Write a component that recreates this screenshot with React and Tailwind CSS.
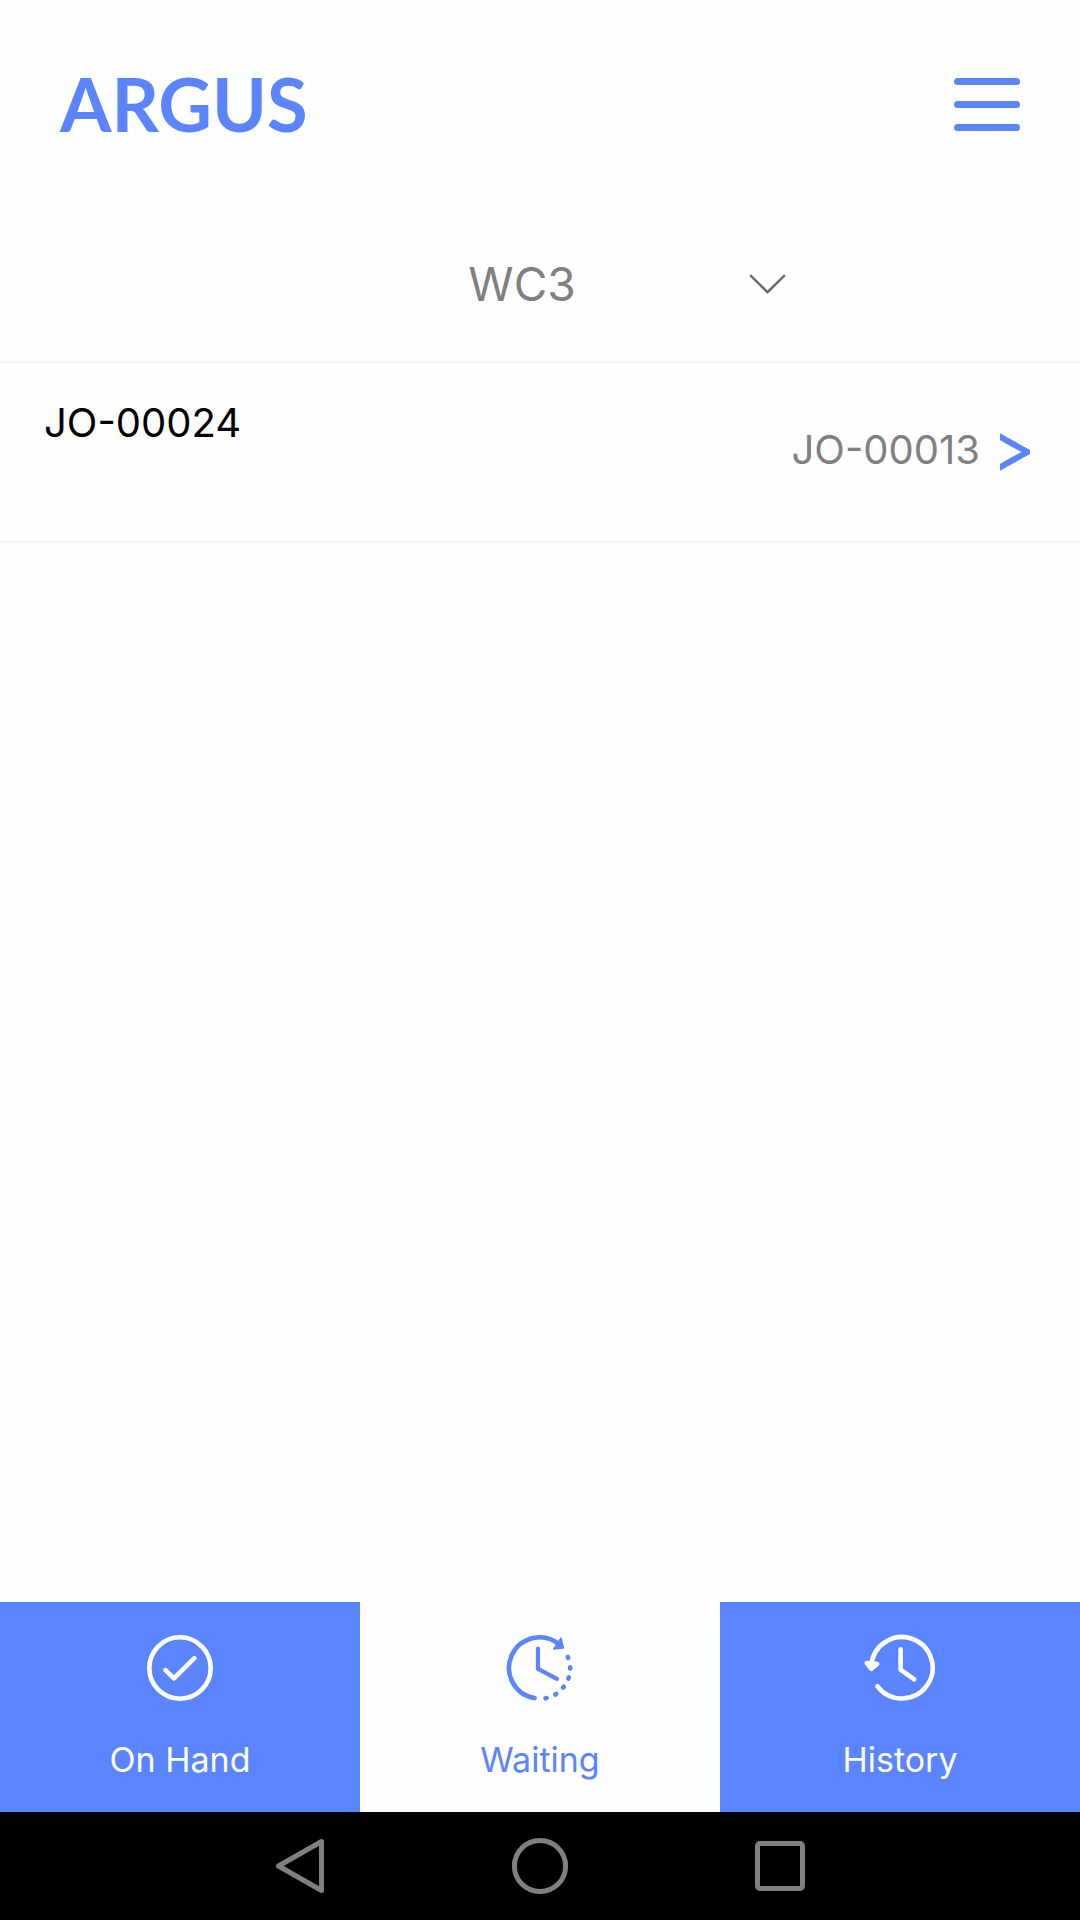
import React, { useState } from 'react';

const WORK_CENTERS = ['WC1', 'WC2', 'WC3'];

const JOB_ORDERS = [{ id: 'JO-00024', next: 'JO-00013' }];

const TABS = [
  { key: 'onhand', label: 'On Hand', Icon: CheckIcon },
  { key: 'waiting', label: 'Waiting', Icon: WaitingIcon },
  { key: 'history', label: 'History', Icon: HistoryIcon },
];

function CheckIcon() {
  return (
    <svg width="72" height="72" viewBox="0 0 72 72" fill="none" stroke="currentColor" strokeWidth="4.6" strokeLinecap="round" strokeLinejoin="round">
      <circle cx="36" cy="36" r="30.7" />
      <path d="M21.5 38.2 30 46.4 50.4 26.2" />
    </svg>
  );
}

function WaitingIcon() {
  return (
    <svg width="72" height="72" viewBox="0 0 72 72" fill="none" stroke="currentColor" strokeWidth="4.6" strokeLinecap="round" strokeLinejoin="round">
      <path d="M30.5 66.1A30.6 30.6 0 1 1 55.5 12.7" />
      <path d="M57 6.2 59.4 16 49.8 16.9Z" fill="currentColor" strokeWidth="1.6" />
      <path d="M34 16.5V36.8L53 46.8" strokeWidth="4.2" />
      <path d="M63.8 24.8 64.2 25.8M66.2 35.4 66.1 36.4M64.8 45.5 64.4 46.5M59.8 54.7 59.1 55.5M52.2 61.9 51.3 62.5M42.6 66 41.6 66.3" />
    </svg>
  );
}

function HistoryIcon() {
  return (
    <svg width="72" height="72" viewBox="0 0 72 72" fill="none" stroke="currentColor" strokeWidth="4.6" strokeLinecap="round" strokeLinejoin="round">
      <path d="M7.4 33A30.7 30.7 0 1 1 13.5 54.3" />
      <path d="M2.8 31 7.4 36.8 13.2 32Z" fill="currentColor" />
      <path d="M36.6 17.2V37.6L50.2 47.4" />
    </svg>
  );
}

function Header() {
  return (
    <header className="flex h-52 items-center justify-between px-15">
      <a href="#home" className="font-[Lato,sans-serif] text-[74px] leading-none font-bold text-[#5b84ff]">ARGUS</a>
      <button type="button" aria-label="Menu" className="flex flex-col gap-4">
        <span className="h-[7px] w-[66px] rounded-full bg-[#5b84ff]" />
        <span className="h-[7px] w-[66px] rounded-full bg-[#5b84ff]" />
        <span className="h-[7px] w-[66px] rounded-full bg-[#5b84ff]" />
      </button>
    </header>
  );
}

function WorkCenterSelect({ value, onChange }) {
  return (
    <div className="flex justify-center border-b-2 border-[#f2f2fa] pt-9 pb-[37px]">
      <div className="relative w-1/2">
        <select
          aria-label="Work center"
          value={value}
          onChange={(e) => onChange(e.target.value)}
          className="h-20 w-full appearance-none bg-transparent pr-9 text-[46px] text-[#808080] [text-align-last:center]"
        >
          {WORK_CENTERS.map((wc) => <option key={wc}>{wc}</option>)}
        </select>
        <svg className="pointer-events-none absolute top-1/2 right-6 -translate-y-1/2" width="37" height="20" viewBox="0 0 37 20" fill="none" stroke="#6b6b6b" strokeWidth="2.4">
          <path d="M1.2 1.2 18.5 18.2 35.8 1.2" />
        </svg>
      </div>
    </div>
  );
}

function JobRow({ job }) {
  return (
    <li className="border-b-2 border-[#f2f2fa]">
      <a href={`#${job.id}`} className="flex h-[178px] justify-between pr-[50px] pl-11 text-[40px] leading-12">
        <span className="pt-9 text-black">{job.id}</span>
        <span className="flex items-center gap-5 pb-1 text-[#808080]">
          {job.next}
          <svg className="mt-1" width="30" height="38" viewBox="0 0 30 38" fill="none" stroke="#5b84ff" strokeWidth="6">
            <path d="M-4 1.5 27.5 19 -4 36.5" />
          </svg>
        </span>
      </a>
    </li>
  );
}

function TabBar({ active, onSelect }) {
  return (
    <nav className="grid grid-cols-3">
      {TABS.map(({ key, label, Icon }) => (
        <button
          key={key}
          type="button"
          onClick={() => onSelect(key)}
          className={`flex h-[210px] flex-col items-center gap-8 pt-[30px] text-[34px] leading-12 ${active === key ? 'text-[#5b84ff]' : 'bg-[#5b84ff] text-white'}`}
        >
          <Icon />
          {label}
        </button>
      ))}
    </nav>
  );
}

function SystemBar() {
  return (
    <div className="flex h-27 items-center justify-center gap-45 bg-black">
      <button type="button" aria-label="Back">
        <svg width="60" height="60" viewBox="0 0 60 60" fill="none" stroke="#808080" strokeWidth="5" strokeLinejoin="round">
          <path d="M51.5 5.5V54.5L8.5 30Z" />
        </svg>
      </button>
      <button type="button" aria-label="Home">
        <svg width="60" height="60" viewBox="0 0 60 60" fill="none" stroke="#808080" strokeWidth="5">
          <circle cx="30" cy="30" r="25.6" />
        </svg>
      </button>
      <button type="button" aria-label="Recent apps">
        <svg width="60" height="60" viewBox="0 0 60 60" fill="none" stroke="#808080" strokeWidth="5">
          <rect x="7.5" y="7.5" width="45" height="45" rx="2.5" />
        </svg>
      </button>
    </div>
  );
}

export default function App() {
  const [workCenter, setWorkCenter] = useState('WC3');
  const [tab, setTab] = useState('waiting');

  return (
    <div className="flex min-h-screen flex-col bg-[#fefefe] font-[Inter,sans-serif]">
      <Header />
      <WorkCenterSelect value={workCenter} onChange={setWorkCenter} />
      <ul className="flex-1">
        {JOB_ORDERS.map((job) => <JobRow key={job.id} job={job} />)}
      </ul>
      <TabBar active={tab} onSelect={setTab} />
      <SystemBar />
    </div>
  );
}
